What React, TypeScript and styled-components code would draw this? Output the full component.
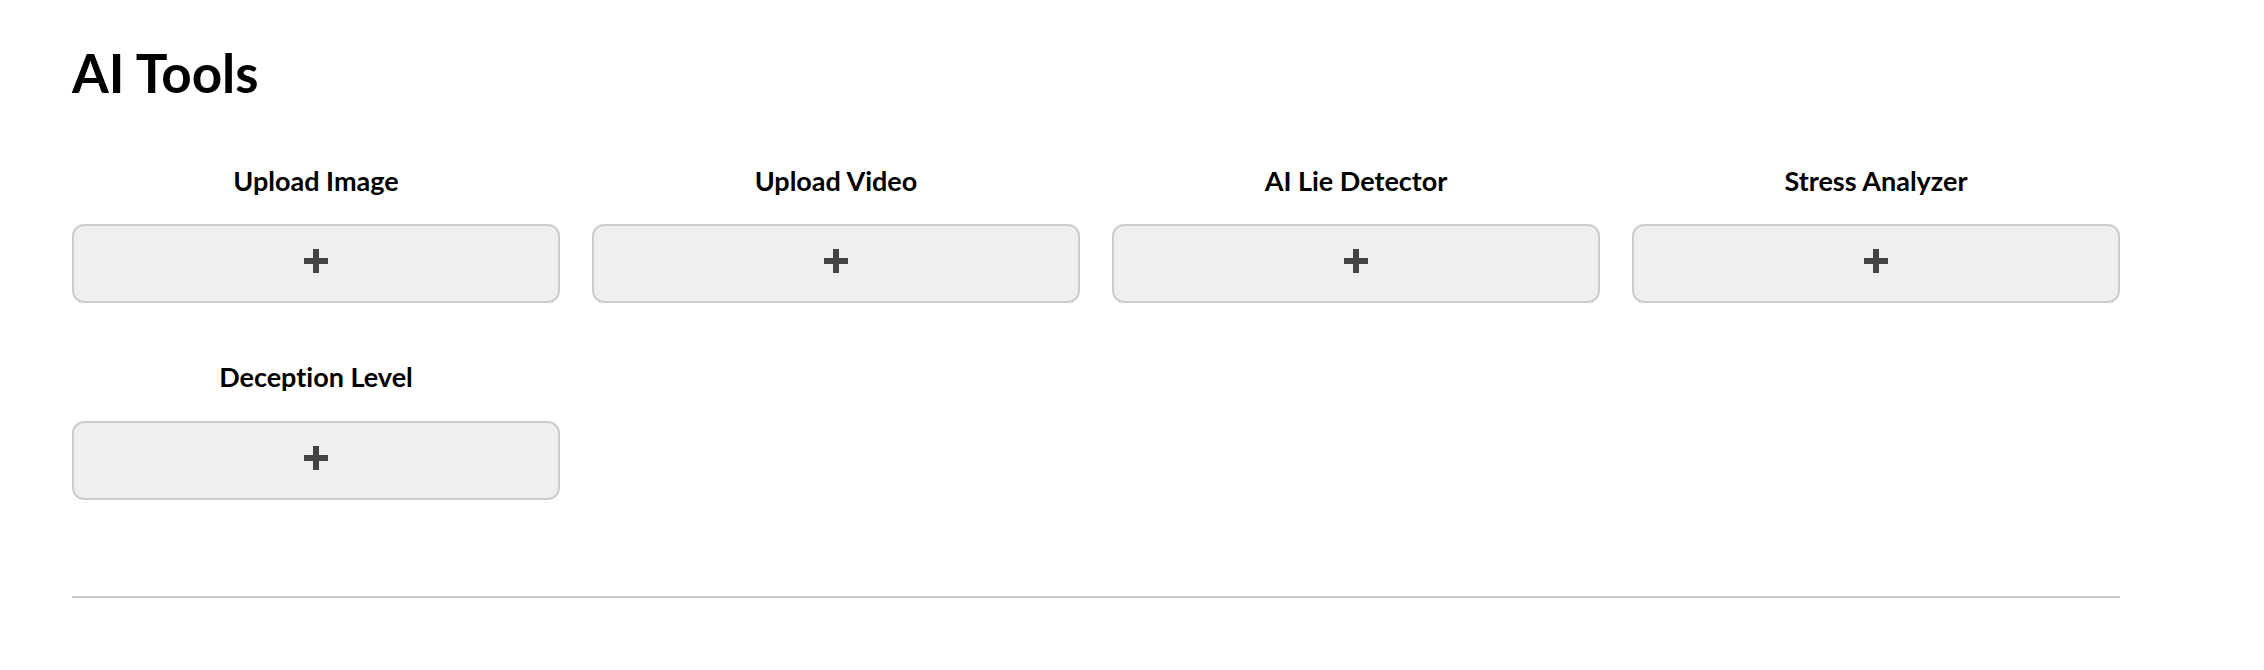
import React from "react";
import styled, { createGlobalStyle } from "styled-components";

const GlobalStyle = createGlobalStyle`
  html, body {
    margin: 0;
    padding: 0;
    background: #ffffff;
  }
  body {
    font-family: Lato, "Liberation Sans", sans-serif;
    font-variant-ligatures: none;
    color: #000000;
  }
  * { box-sizing: border-box; }
`;

const Page = styled.main`
  width: 2120px;
  padding: 0 0 60px 72px;
`;

const Title = styled.h1`
  margin: 41px 0 0 0;
  font-size: 53px;
  line-height: 1.2;
  font-weight: 700;
`;

const ToolGrid = styled.section`
  display: grid;
  grid-template-columns: repeat(4, 1fr);
  column-gap: 32px;
  row-gap: 58.5px;
  margin-top: 60px;
`;

const ToolItem = styled.div`
  display: flex;
  flex-direction: column;
  align-items: center;
`;

const ToolLabel = styled.h3`
  margin: 0 0 27px 0;
  font-size: 27px;
  line-height: 1.2;
  font-weight: 700;
  text-align: center;
`;

const AddButton = styled.button`
  width: 100%;
  height: 79px;
  display: flex;
  align-items: center;
  justify-content: center;
  padding: 0 0 5px 0;
  background: #efefef;
  border: 2px solid #cccccc;
  border-radius: 12px;
  cursor: pointer;
`;

const Divider = styled.hr`
  margin: 96.5px 0 0 0;
  border: none;
  border-top: 2px solid #cccccc;
  height: 0;
`;

const PlusIcon = () => (
  <svg width="24" height="24" viewBox="0 0 24 24" aria-hidden="true">
    <rect x="9" y="0" width="6" height="24" fill="#444444" />
    <rect x="0" y="9" width="24" height="6" fill="#444444" />
  </svg>
);

const tools = [
  "Upload Image",
  "Upload Video",
  "AI Lie Detector",
  "Stress Analyzer",
  "Deception Level",
];

export default function App() {
  return (
    <>
      <GlobalStyle />
      <Page>
        <Title>AI Tools</Title>
        <ToolGrid>
          {tools.map((t) => (
            <ToolItem key={t}>
              <ToolLabel>{t}</ToolLabel>
              <AddButton aria-label={`Add ${t}`}>
                <PlusIcon />
              </AddButton>
            </ToolItem>
          ))}
        </ToolGrid>
        <Divider />
      </Page>
    </>
  );
}
